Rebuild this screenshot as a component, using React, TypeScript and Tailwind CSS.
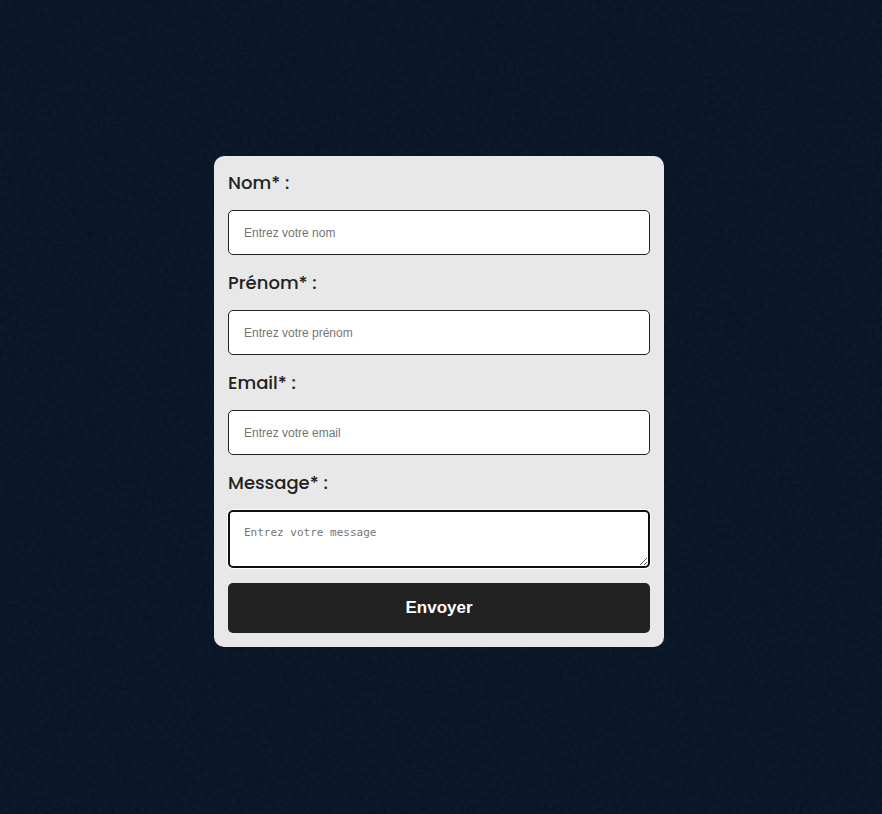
const fields = [
  { id: "nom", label: "Nom* :", type: "text", placeholder: "Entrez votre nom" },
  { id: "prenom", label: "Prénom* :", type: "text", placeholder: "Entrez votre prénom" },
  { id: "email", label: "Email* :", type: "email", placeholder: "Entrez votre email" },
];

const labelClass =
  "font-[Poppins,Inter,sans-serif] text-[18px] leading-[25px] font-medium text-[#222222]";

function Grain() {
  return (
    <svg className="pointer-events-none absolute inset-0 h-full w-full opacity-15" aria-hidden="true">
      <filter id="grain" x="0" y="0" width="100%" height="100%" colorInterpolationFilters="sRGB">
        <feTurbulence type="fractalNoise" baseFrequency="0.25" numOctaves="3" />
        <feColorMatrix values="0 0 0 0 0  0 0 0 0 0.02  0 0 0 0 0.08  0 0 0 4 -1.6" />
      </filter>
      <rect width="100%" height="100%" filter="url(#grain)" />
    </svg>
  );
}

export default function App() {
  return (
    <main className="relative flex min-h-screen items-center justify-center bg-[#0b192b] pr-1 pb-[11px] font-['Liberation_Sans',Arial,sans-serif]">
      <Grain />
      <form
        className="relative flex w-full max-w-[450px] flex-col gap-[15px] rounded-[10px] bg-[#e8e8e8] p-[14px]"
        onSubmit={(e) => e.preventDefault()}
      >
        {fields.map((f) => (
          <div key={f.id} className="flex flex-col gap-[15px]">
            <label htmlFor={f.id} className={labelClass}>
              {f.label}
            </label>
            <input
              id={f.id}
              type={f.type}
              placeholder={f.placeholder}
              className="h-[45px] w-full rounded-[5px] border border-[#222222] bg-white px-[15px] text-xs text-[#222222] placeholder:text-[#757575]"
            />
          </div>
        ))}
        <div className="flex flex-col gap-[15px]">
          <label htmlFor="message" className={labelClass}>
            Message* :
          </label>
          <textarea
            id="message"
            placeholder="Entrez votre message"
            className="h-[58px] w-full resize rounded-[5px] border-2 border-[#101010] bg-white p-[14px] font-['DejaVu_Sans_Mono',monospace] text-[11px] leading-[14px] text-[#222222] shadow-[0_0_0_1px_#ffffff] outline-none placeholder:text-[#757575]"
          />
        </div>
        <button
          type="submit"
          className="h-[50px] w-full cursor-pointer rounded-[5px] bg-[#222222] text-[17px] font-bold text-white"
        >
          Envoyer
        </button>
      </form>
    </main>
  );
}
